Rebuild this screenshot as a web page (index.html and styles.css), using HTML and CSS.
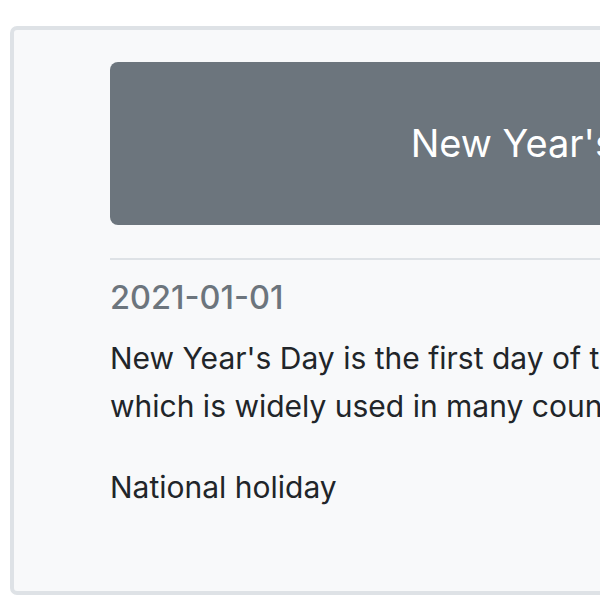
FILE: index.html
```html
<!DOCTYPE html>
<html>
<head>
<meta charset="utf-8">
<link rel="stylesheet" href="styles.css">
</head>
<body>
<div class="card">
  <div class="card-body">
    <div class="banner"><h3 class="banner-title">New Year's Day</h3></div>
    <hr class="divider">
    <h5 class="date">2021-01-01</h5>
    <p class="text">New Year's Day is the first day of the Gregorian calendar, which is widely used in many countries around the world.</p>
    <p class="text">National holiday</p>
  </div>
</div>
</body>
</html>
```
FILE: styles.css
```css
html, body {
  margin: 0;
  padding: 0;
  overflow: hidden;
  background: #ffffff;
}
body {
  padding: 26px 0 0 10px;
  font-family: Inter, "Liberation Sans", sans-serif;
  color: #212529;
}
.card {
  width: 1086px;
  background: #f8f9fa;
  border: 4px solid #dee2e6;
  border-radius: 7px;
  box-sizing: border-box;
}
.card-body {
  padding: 32px 96px 45px 96px;
}
.banner {
  background: #6c757d;
  border-radius: 8px;
  height: 163px;
  display: flex;
  align-items: center;
  justify-content: center;
}
.banner-title {
  margin: 0;
  color: #ffffff;
  font-size: 38px;
  font-weight: 400;
  line-height: 1.2;
}
.divider {
  margin: 33px 0 0 0;
  border: 0;
  border-top: 2px solid #dee2e6;
}
.date {
  margin: 18px 0 18px 0;
  font-size: 32.5px;
  font-weight: 500;
  line-height: 1.2;
  color: #6c757d;
}
.text {
  margin: 0 0 34px 0;
  font-size: 30px;
  line-height: 47.5px;
}
```
